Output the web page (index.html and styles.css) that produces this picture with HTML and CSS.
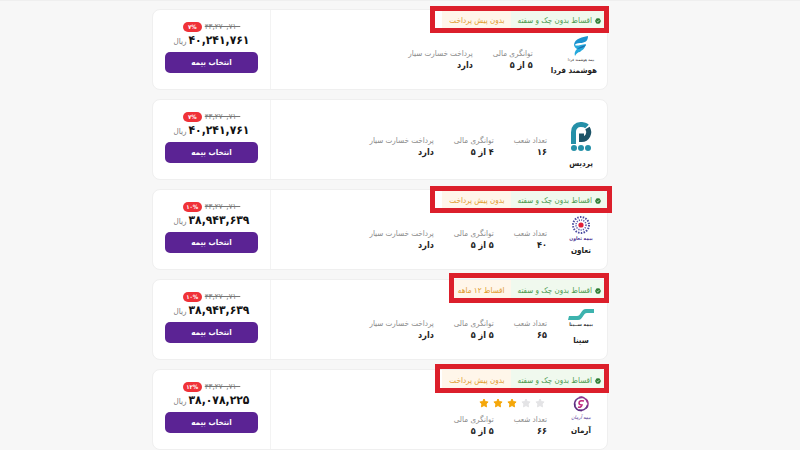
FILE: index.html
```html
<!DOCTYPE html>
<html lang="fa" dir="rtl">
<head>
<meta charset="utf-8">
<title>انتخاب بیمه</title>
<link rel="stylesheet" href="styles.css">
</head>
<body>
<svg class="defs" width="0" height="0">
	<symbol id="check" viewBox="0 0 12 12">
		<path fill="#2e7d32" d="M6 0l1.600 1.100 1.900.1.600 1.800L11.700 4.300 11.100 6l.6 1.800-1.600 1.200-.6 1.800-1.900.1L6 12l-1.600-1.100-1.900-.1-.6-1.800L.3 7.800.900 6 .3 4.300l1.600-1.300.6-1.800 1.900-.1z"/>
		<path fill="none" stroke="#fff" stroke-width="1.400" d="M3.500 6.200l1.800 1.700 3.200-3.500"/>
	</symbol>
	<symbol id="star" viewBox="0 0 20 20">
		<path stroke-width="2" stroke-linejoin="round" d="M10 2l2.500 5.200 5.700.8-4.100 4 1 5.700L10 15l-5.100 2.700 1-5.700-4.100-4 5.700-.8z"/>
	</symbol>
</svg>

<main class="list">
	<article class="card">
		<div class="info">
			<div class="tags">
				<span class="tag green"><svg class="check"><use href="#check"/></svg>اقساط بدون چک و سفته</span>
				<span class="tag orange">بدون پیش پرداخت</span>
			</div>
			<div class="mark"></div>
			<div class="row">
				<div class="company">
					<svg class="logo" viewBox="0 0 32 26">
						<path fill="#1c93cf" d="M9 10C9 4 13 2 23 0c0 5-3 7-8 7-3 0-5 1-6 3z"/>
						<path fill="#25a9dc" d="M9 8c2 3 5 1 12 0-1 5-4 6-6 8-2 0-4 2-5 4-1-3 0-5 2-7-2-1-3-3-3-5z"/>
						<path fill="#1d6fae" d="M12 13c2-2 5-3 9-4-2 3-5 3-9 4z"/>
						<text class="mini" x="16" y="25" text-anchor="middle">بیمه هوشمند فردا</text>
					</svg>
					<h2 class="name">هوشمند فردا</h2>
				</div>
				<dl class="stats">
					<div><dt>توانگری مالی</dt><dd>۵ از ۵</dd></div>
					<div><dt>پرداخت خسارت سیار</dt><dd>دارد</dd></div>
				</dl>
			</div>
		</div>
		<div class="price">
			<div class="old"><del>۴۳,۲۷۰,۷۱۰</del><span class="off">۷%</span></div>
			<div class="new"><strong>۴۰,۲۴۱,۷۶۱</strong><small>ریال</small></div>
			<button class="buy" type="button">انتخاب بیمه</button>
		</div>
	</article>

	<article class="card">
		<div class="info plain">
			<div class="row">
				<div class="company">
					<svg class="logo tall" viewBox="0 0 32 34">
						<path fill="none" stroke="#2590a8" stroke-width="5" d="M8.500 23V11a7 7 0 0 1 7-7.500h2"/>
						<path fill="none" stroke="#2590a8" stroke-width="5" d="M16 3.500q4 0 6 2"/>
						<path fill="none" stroke="#1d5468" stroke-width="5" d="M22.500 7c3 5 0 11.500-6 11.500v-6"/>
						<circle cx="9" cy="27" r="3" fill="#2590a8"/>
						<circle cx="16" cy="27" r="3" fill="#2590a8"/>
						<circle cx="23" cy="27" r="3" fill="#2590a8"/>
					</svg>
					<h2 class="name">پردیس</h2>
				</div>
				<dl class="stats">
					<div><dt>تعداد شعب</dt><dd>۱۶</dd></div>
					<div><dt>توانگری مالی</dt><dd>۴ از ۵</dd></div>
					<div><dt>پرداخت خسارت سیار</dt><dd>دارد</dd></div>
				</dl>
			</div>
		</div>
		<div class="price">
			<div class="old"><del>۴۳,۲۷۰,۷۱۰</del><span class="off">۷%</span></div>
			<div class="new"><strong>۴۰,۲۴۱,۷۶۱</strong><small>ریال</small></div>
			<button class="buy" type="button">انتخاب بیمه</button>
		</div>
	</article>

	<article class="card">
		<div class="info">
			<div class="tags">
				<span class="tag green"><svg class="check"><use href="#check"/></svg>اقساط بدون چک و سفته</span>
				<span class="tag orange">بدون پیش پرداخت</span>
			</div>
			<div class="mark wide"></div>
			<div class="row">
				<div class="company">
					<svg class="logo" viewBox="0 0 32 26">
						<circle cx="16" cy="9" r="8" fill="none" stroke="#4a4aa0" stroke-width="2" stroke-dasharray="1.500 1.300"/>
						<circle cx="16" cy="9" r="5" fill="none" stroke="#5b5bab" stroke-width="1.500" stroke-dasharray="1.200 1.100"/>
						<circle cx="16" cy="9" r="2.600" fill="#e3203a"/>
						<text class="mini bold violet" x="16" y="24" text-anchor="middle">بیمه تعاون</text>
					</svg>
					<h2 class="name">تعاون</h2>
				</div>
				<dl class="stats">
					<div><dt>تعداد شعب</dt><dd>۴۰</dd></div>
					<div><dt>توانگری مالی</dt><dd>۵ از ۵</dd></div>
					<div><dt>پرداخت خسارت سیار</dt><dd>دارد</dd></div>
				</dl>
			</div>
		</div>
		<div class="price">
			<div class="old"><del>۴۳,۲۷۰,۷۱۰</del><span class="off">۱۰%</span></div>
			<div class="new"><strong>۳۸,۹۴۳,۶۳۹</strong><small>ریال</small></div>
			<button class="buy" type="button">انتخاب بیمه</button>
		</div>
	</article>

	<article class="card">
		<div class="info">
			<div class="tags">
				<span class="tag green"><svg class="check"><use href="#check"/></svg>اقساط بدون چک و سفته</span>
				<span class="tag orange">اقساط ۱۲ ماهه</span>
			</div>
			<div class="mark short"></div>
			<div class="row">
				<div class="company">
					<svg class="logo" viewBox="0 0 32 26">
						<path fill="#3db3ae" d="M4 10h8c4 0 4-7 9-7h8v4h-7c-4 0-4 7-9 7H3z"/>
						<text class="mini bold" x="16" y="20" text-anchor="middle">بیمه ســینا</text>
					</svg>
					<h2 class="name">سینا</h2>
				</div>
				<dl class="stats">
					<div><dt>تعداد شعب</dt><dd>۶۵</dd></div>
					<div><dt>توانگری مالی</dt><dd>۵ از ۵</dd></div>
					<div><dt>پرداخت خسارت سیار</dt><dd>دارد</dd></div>
				</dl>
			</div>
		</div>
		<div class="price">
			<div class="old"><del>۴۳,۲۷۰,۷۱۰</del><span class="off">۱۰%</span></div>
			<div class="new"><strong>۳۸,۹۴۳,۶۳۹</strong><small>ریال</small></div>
			<button class="buy" type="button">انتخاب بیمه</button>
		</div>
	</article>

	<article class="card">
		<div class="info">
			<div class="tags">
				<span class="tag green"><svg class="check"><use href="#check"/></svg>اقساط بدون چک و سفته</span>
				<span class="tag orange">بدون پیش پرداخت</span>
			</div>
			<div class="mark last"></div>
			<div class="row">
				<div class="company">
					<svg class="logo" viewBox="0 0 32 26">
						<g fill="none" stroke-width="1.500">
							<path stroke="#6b3a8c" d="M10 10a6.500 6.500 0 0 1 7-8.500"/>
							<path stroke="#8c3590" d="M14 1.500a6.500 6.500 0 0 1 8.500 5"/>
							<path stroke="#a0368c" d="M21 3a6.500 6.500 0 0 1 0 9.500"/>
							<path stroke="#6b3a8c" d="M22.500 9a6.500 6.500 0 0 1-8.500 5"/>
							<path stroke="#5b2b80" d="M17 14.500a6.500 6.500 0 0 1-7.500-7"/>
							<path stroke="#c0287c" d="M19 5q-5-1-5 2 0 2 3 2-1 3-4 2"/>
						</g>
						<text class="mini script violet" x="16" y="23" text-anchor="middle">بیمه آرمان</text>
					</svg>
					<h2 class="name">آرمان</h2>
				</div>
				<div class="facts">
					<div class="stars">
						<svg><use href="#star"/></svg>
						<svg><use href="#star"/></svg>
						<svg class="on"><use href="#star"/></svg>
						<svg class="on"><use href="#star"/></svg>
						<svg class="on"><use href="#star"/></svg>
					</div>
					<dl class="stats">
						<div><dt>تعداد شعب</dt><dd>۶۶</dd></div>
						<div><dt>توانگری مالی</dt><dd>۵ از ۵</dd></div>
					</dl>
				</div>
			</div>
		</div>
		<div class="price">
			<div class="old"><del>۴۳,۲۷۰,۷۱۰</del><span class="off">۱۲%</span></div>
			<div class="new"><strong>۳۸,۰۷۸,۲۲۵</strong><small>ریال</small></div>
			<button class="buy" type="button">انتخاب بیمه</button>
		</div>
	</article>
</main>
</body>
</html>
```

FILE: styles.css
```css
*{
	box-sizing:border-box;
}
body{
	margin:0;
	border-top:1px solid #efefef;
	background:#f7f7f7;
	color:#222;
	font:8px/12px "DejaVu Sans Condensed","DejaVu Sans",sans-serif;
}
.defs{
	position:absolute;
}
.list{
	margin:0 24% 0 19%;
	padding:8px 0 0;
	display:grid;
	gap:9px;
}
.card{
	display:flex;
	min-height:81px;
	background:#fff;
	border:1px solid #efefef;
	border-radius:8px;
}
.info{
	flex:1;
	position:relative;
	display:flex;
	flex-direction:column;
}
.tags{
	display:flex;
	height:19px;
}
.tag{
	display:flex;
	align-items:center;
	padding:2px 6px 0 7px;
}
.green{
	color:#4c9a50;
	background:#f0f9ee;
	border-top-right-radius:8px;
	gap:3px;
}
.orange{
	color:#e09a2c;
	background:#fff6ea;
}
.check{
	width:6px;
	height:6px;
}
/* red frame over the tags */
.mark{
	position:absolute;
	top:-4px;
	right:-2px;
	width:179px;
	height:27px;
	border:5px solid #dc1f2b;
}
.wide{
	right:-5px;
	width:182px;
}
.short{
	top:-7px;
	width:160px;
	height:30px;
}
.last{
	top:-6px;
	width:174px;
	height:29px;
}
.row{
	display:flex;
	gap:18px;
	padding:7px 10px 0 0;
}
.plain .row{
	padding-top:21px;
}
.company{
	min-width:32px;
}
.logo{
	display:block;
	width:32px;
	height:26px;
}
.tall{
	height:34px;
}
.mini{
	font-size:4px;
	fill:#333;
}
.bold{
	font-size:5px;
	font-weight:bold;
}
.script{
	font-size:5px;
	font-style:italic;
}
.violet{
	fill:#4b3090;
}
.name{
	margin:3px 0 0;
	font-size:8px;
	line-height:12px;
	font-weight:bold;
	text-align:center;
}
.stats{
	display:flex;
	gap:20px;
	margin:0;
	padding-top:12px;
}
.plain .stats{
	padding-top:14px;
}
.facts .stats{
	padding-top:6px;
}
dt{
	color:#8a8a8a;
}
dd{
	margin:0;
	font-size:9px;
	line-height:11px;
	font-weight:bold;
}
.stars{
	display:flex;
	gap:4px;
	padding:2px 2px 0;
}
.stars svg{
	width:10px;
	height:10px;
	fill:#e4e4e6;
	stroke:#e4e4e6;
}
.stars .on{
	fill:#f5a70a;
	stroke:#f5a70a;
}
.price{
	width:118px;
	padding:11px 12px 0;
	border-right:1px solid #f3f3f3;
	text-align:center;
}
.old{
	display:flex;
	justify-content:center;
	align-items:center;
	gap:3px;
	color:#777;
}
.off{
	width:19px;
	border-radius:5px;
	background:#f03238;
	color:#fff;
	font-size:6px;
	line-height:10px;
	font-weight:bold;
}
.new{
	display:flex;
	justify-content:center;
	align-items:baseline;
	gap:2px;
	line-height:15px;
	color:#777;
}
.new strong{
	color:#111;
	font-size:12px;
}
.buy{
	width:100%;
	height:21px;
	margin:3px 0 0;
	padding:0;
	border:0;
	border-radius:5px;
	background:#5b2394;
	color:#fff;
	font:inherit;
	font-weight:bold;
	cursor:pointer;
}
.new small{
	font-size:8px;
}
```
